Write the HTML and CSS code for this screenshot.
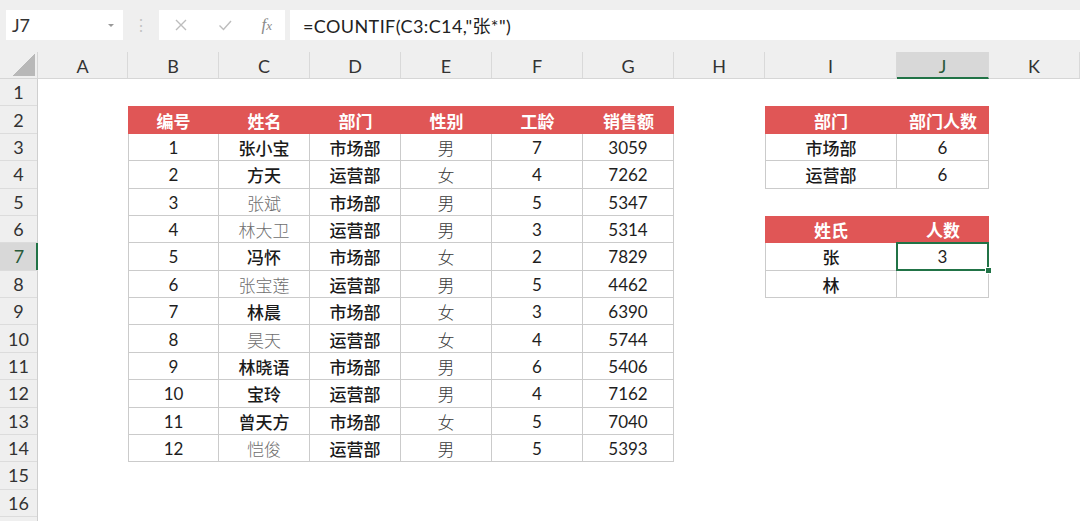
FILE: index.html
```html
<!DOCTYPE html>
<html lang="zh-CN">
<head>
<meta charset="utf-8">
<title>COUNTIF</title>
<link rel="stylesheet" href="styles.css">
</head>
<body>
<div class="toolbar">
  <div class="namebox"><span class="ref">J7</span><span class="dd"></span></div>
  <div class="grip">⋮</div>
  <div class="funcbox">
    <svg class="ico" width="16" height="16" viewBox="0 0 16 16"><path d="M3 3 L13 13 M13 3 L3 13" stroke="#bdbdbd" stroke-width="1.4" fill="none"/></svg>
    <svg class="ico" width="16" height="16" viewBox="0 0 16 16"><path d="M2.5 8.5 L6.5 12.5 L14 4" stroke="#bdbdbd" stroke-width="1.4" fill="none"/></svg>
    <span class="fx">f<i>x</i></span>
  </div>
  <div class="formula">=COUNTIF(C3:C14,"张*")</div>
</div>

<div class="sheet">
  <div class="colhdr">
    <div class="corner"><div class="tri"></div></div>
    <div class="ch">A</div><div class="ch">B</div><div class="ch">C</div><div class="ch">D</div><div class="ch">E</div><div class="ch">F</div><div class="ch">G</div><div class="ch">H</div><div class="ch">I</div><div class="ch sel">J</div><div class="ch">K</div>
  </div>
  <div class="rowhdr">
    <div class="rh">1</div><div class="rh">2</div><div class="rh">3</div><div class="rh">4</div><div class="rh">5</div><div class="rh">6</div><div class="rh sel">7</div><div class="rh">8</div><div class="rh">9</div><div class="rh">10</div><div class="rh">11</div><div class="rh">12</div><div class="rh">13</div><div class="rh">14</div><div class="rh">15</div><div class="rh">16</div><div class="rh"></div>
  </div>

  <div class="tbl main">
    <div class="h">编号</div><div class="h">姓名</div><div class="h">部门</div><div class="h">性别</div><div class="h">工龄</div><div class="h">销售额</div>
    <div class="c first">1</div><div class="c b">张小宝</div><div class="c b">市场部</div><div class="c s">男</div><div class="c">7</div><div class="c">3059</div>
    <div class="c first">2</div><div class="c b">方天</div><div class="c b">运营部</div><div class="c s">女</div><div class="c">4</div><div class="c">7262</div>
    <div class="c first">3</div><div class="c g">张斌</div><div class="c b">市场部</div><div class="c s">男</div><div class="c">5</div><div class="c">5347</div>
    <div class="c first">4</div><div class="c g">林大卫</div><div class="c b">运营部</div><div class="c s">男</div><div class="c">3</div><div class="c">5314</div>
    <div class="c first">5</div><div class="c b">冯怀</div><div class="c b">市场部</div><div class="c s">女</div><div class="c">2</div><div class="c">7829</div>
    <div class="c first">6</div><div class="c g">张宝莲</div><div class="c b">运营部</div><div class="c s">男</div><div class="c">5</div><div class="c">4462</div>
    <div class="c first">7</div><div class="c b">林晨</div><div class="c b">市场部</div><div class="c s">女</div><div class="c">3</div><div class="c">6390</div>
    <div class="c first">8</div><div class="c g">昊天</div><div class="c b">运营部</div><div class="c s">女</div><div class="c">4</div><div class="c">5744</div>
    <div class="c first">9</div><div class="c b">林晓语</div><div class="c b">市场部</div><div class="c s">男</div><div class="c">6</div><div class="c">5406</div>
    <div class="c first">10</div><div class="c b">宝玲</div><div class="c b">运营部</div><div class="c s">男</div><div class="c">4</div><div class="c">7162</div>
    <div class="c first">11</div><div class="c b">曾天方</div><div class="c b">市场部</div><div class="c s">女</div><div class="c">5</div><div class="c">7040</div>
    <div class="c first">12</div><div class="c g">恺俊</div><div class="c b">运营部</div><div class="c s">男</div><div class="c">5</div><div class="c">5393</div>
  </div>

  <div class="tbl dept">
    <div class="h">部门</div><div class="h">部门人数</div>
    <div class="c first b">市场部</div><div class="c">6</div>
    <div class="c first b">运营部</div><div class="c">6</div>
  </div>

  <div class="tbl surname">
    <div class="h">姓氏</div><div class="h">人数</div>
    <div class="c first b">张</div><div class="c active">3</div>
    <div class="c first b">林</div><div class="c"></div>
  </div>
</div>
</body>
</html>
```

FILE: styles.css
```css
* { box-sizing: border-box; }
html, body { margin: 0; padding: 0; }
body {
  width: 1080px;
  height: 521px;
  overflow: hidden;
  background: #ffffff;
  font-family: Lato, "Noto Sans CJK SC", sans-serif;
  color: #222;
}

.toolbar {
  height: 52px;
  background: #efefef;
  display: flex;
  align-items: flex-start;
  padding-top: 10px;
}
.namebox {
  margin-left: 6px;
  width: 117px;
  height: 30px;
  background: #fff;
  display: flex;
  align-items: center;
  justify-content: space-between;
  padding: 0 9px 0 6px;
}
.ref { font-size: 18px; color: #333; }
.dd {
  width: 0; height: 0;
  border-left: 3px solid transparent;
  border-right: 3px solid transparent;
  border-top: 3px solid #999;
}
.grip {
  width: 36px;
  height: 30px;
  display: flex;
  align-items: center;
  justify-content: center;
  color: #c4c4c4;
  font-size: 16px;
}
.funcbox {
  width: 126px;
  height: 30px;
  background: #fff;
  display: flex;
  align-items: center;
  justify-content: space-between;
  padding: 0 13px 0 14px;
}
.fx {
  font-family: "Liberation Serif", serif;
  font-style: italic;
  font-size: 17px;
  color: #8a8a8a;
}
.fx i { font-size: 13px; }
.formula {
  margin-left: 5px;
  flex: 1;
  height: 30px;
  background: #fff;
  display: flex;
  align-items: center;
  padding-left: 13px;
  font-size: 18px;
  color: #222;
  letter-spacing: 0.4px;
}

.sheet {
  display: grid;
  grid-template-columns: 38px 90px repeat(7, 91px) 132px 92px 91px;
  grid-template-rows: 27px repeat(17, 27.375px);
}
.colhdr {
  grid-column: 1 / -1;
  grid-row: 1;
  display: grid;
  grid-template-columns: 38px 90px repeat(7, 91px) 132px 92px 91px;
  background: #efefef;
  border-bottom: 1px solid #d6d6d6;
}
.corner {
  border-right: 1px solid #d6d6d6;
  display: flex;
  align-items: flex-end;
  justify-content: flex-end;
  padding: 0 2px 2px 0;
}
.tri {
  width: 22px;
  height: 22px;
  background: linear-gradient(to bottom right, transparent 50%, #b8b8b8 50%);
}
.ch {
  display: flex;
  align-items: center;
  justify-content: center;
  font-size: 18px;
  color: #333;
  border-right: 1px solid #d9d9d9;
  padding-top: 2px;
}
.ch.sel {
  background: #d8d8d8;
  color: #2a5a3a;
  border-bottom: 2px solid #217346;
  margin-bottom: -1px;
}

.rowhdr {
  grid-column: 1;
  grid-row: 2 / -1;
  display: grid;
  grid-template-rows: repeat(17, 27.375px);
  background: #efefef;
  border-right: 1px solid #cfcfcf;
}
.rh {
  display: flex;
  align-items: center;
  justify-content: center;
  font-size: 18px;
  color: #333;
  border-bottom: 1px solid #dcdcdc;
}
.rh.sel {
  background: #d8d8d8;
  color: #2a5a3a;
  box-shadow: inset -2px 0 0 #217346;
  margin-right: -1px;
}

.tbl {
  display: grid;
}
.main {
  grid-column: 3 / 9;
  grid-row: 3 / 16;
  grid-template-columns: repeat(6, 1fr);
  grid-template-rows: repeat(13, 1fr);
}
.dept {
  grid-column: 10 / 12;
  grid-row: 3 / 6;
  grid-template-columns: 132px 92px;
  grid-template-rows: repeat(3, 1fr);
}
.surname {
  grid-column: 10 / 12;
  grid-row: 7 / 10;
  grid-template-columns: 132px 92px;
  grid-template-rows: repeat(3, 1fr);
}
.h {
  background: #e05656;
  color: #fff;
  font-weight: 700;
  font-size: 17px;
  display: flex;
  align-items: center;
  justify-content: center;
}
.c {
  display: flex;
  align-items: center;
  justify-content: center;
  font-size: 17px;
  color: #1e1e1e;
  border-right: 1px solid #cbcbcb;
  border-bottom: 1px solid #cbcbcb;
  padding-top: 1px;
}
.c.first { border-left: 1px solid #cbcbcb; }
.c.b { font-weight: 500; color: #1a1a1a; }
.c.g { font-weight: 300; color: #6e6e6e; }
.c.s { font-weight: 300; color: #3a3a3a; }
.c.active { position: relative; }
.c.active::after {
  content: "";
  position: absolute;
  left: -1px; top: -1px; right: -1px; bottom: -1px;
  border: 2px solid #217346;
}
.c.active::before {
  content: "";
  position: absolute;
  right: -4px; bottom: -4px;
  width: 5px; height: 5px;
  background: #217346;
  border: 1px solid #fff;
  z-index: 2;
}
```
